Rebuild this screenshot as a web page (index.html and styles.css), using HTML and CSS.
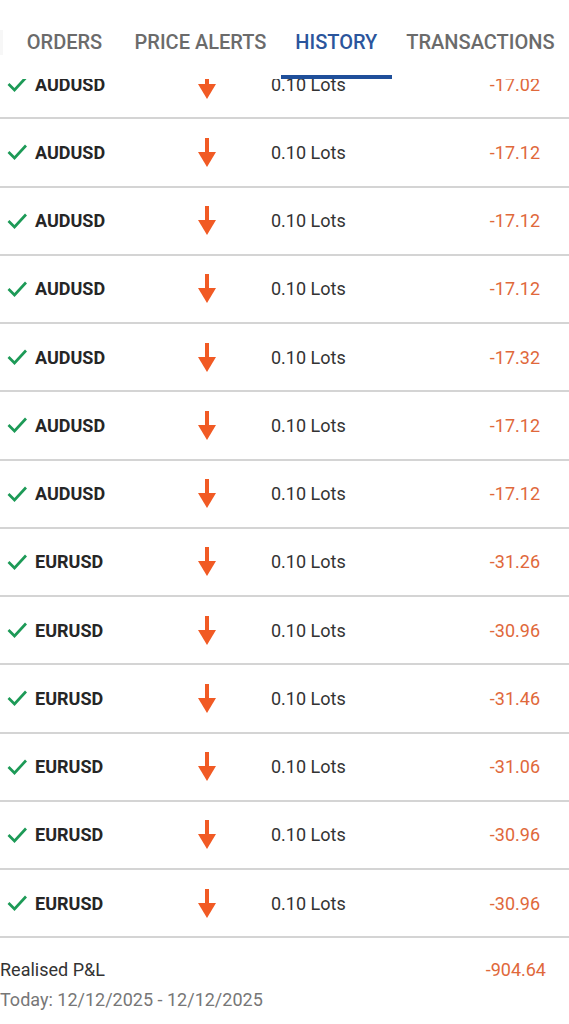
FILE: index.html
```html
<!DOCTYPE html>
<html>
  <head>
    <meta charset="utf-8">
    <meta name="viewport" content="width=device-width, initial-scale=1.0">
    <title>History</title>
    <link rel="stylesheet" href="styles.css">
  </head>
  <body>
  <header class="tabs">
    <div class="tabs__edge"></div>
    <div class="tab tab--first">ORDERS</div>
    <div class="tab">PRICE ALERTS</div>
    <div class="tab tab--active">HISTORY</div>
    <div class="tab">TRANSACTIONS</div>
  </header>
  <main class="history">
    <ul class="trades" id="trades"></ul>
    <footer class="summary">
      <div class="summary__line">
        <span>Realised P&amp;L</span>
        <span class="loss">-904.64</span>
      </div>
      <div class="summary__range">Today: 12/12/2025 - 12/12/2025</div>
    </footer>
  </main>
  <script type="text/javascript">
    var trades = [
      ['AUDUSD', '-17.02'], ['AUDUSD', '-17.12'], ['AUDUSD', '-17.12'],
      ['AUDUSD', '-17.12'], ['AUDUSD', '-17.32'], ['AUDUSD', '-17.12'],
      ['AUDUSD', '-17.12'], ['EURUSD', '-31.26'], ['EURUSD', '-30.96'],
      ['EURUSD', '-31.46'], ['EURUSD', '-31.06'], ['EURUSD', '-30.96'],
      ['EURUSD', '-30.96']
    ];
    var check = '<svg class="trade__check" width="20" height="18" viewBox="0 0 20 18"><polyline points="1.5,9 7.5,15 19,2.5" fill="none" stroke="#1d9a57" stroke-width="2.7"/></svg>';
    var arrow = '<svg class="trade__arrow" width="20" height="29" viewBox="0 0 20 29"><rect x="8" y="0" width="4" height="16" fill="#f15a24"/><polygon points="1,14 19,14 10,29" fill="#f15a24"/></svg>';
    var list = document.getElementById('trades');
    trades.forEach(function(t){
      var li = document.createElement('li');
      li.className = 'trade';
      li.innerHTML = check +
        '<span class="trade__symbol">' + t[0] + '</span>' +
        arrow +
        '<span class="trade__lots">0.10 Lots</span>' +
        '<span class="trade__pl loss">' + t[1] + '</span>';
      list.appendChild(li);
    })
  </script>
  </body>
</html>
```

FILE: styles.css
```css
* {
  box-sizing: border-box;
  font-family: Roboto, "Liberation Sans", Arial, sans-serif;
  margin: 0;
  padding: 0;
}

body, html {
  width: 100%;
  height: 100%;
  background: #fff;
  overflow: hidden;
}

.tabs {
  position: relative;
  z-index: 2;
  height: 79px;
  background: #fff;
  display: flex;
  align-items: stretch;
}

.tabs__edge {
  width: 3px;
  margin: 30px 6px 24px 0;
  background: #f7f7f7;
}

.tab {
  padding: 9px 14.5px 0;
  border-bottom: 4px solid transparent;
  display: flex;
  align-items: center;
  justify-content: center;
  font-size: 20px;
  font-weight: 500;
  color: #6b6b6b;
  white-space: nowrap;
}

.tab--first {
  width: 113px;
}

.tab--active {
  color: #2b559c;
  border-bottom-color: #1f4f9a;
}

.history {
  margin-top: -28px;
}

.trades {
  list-style: none;
}

.trade {
  height: 68.25px;
  border-bottom: 2px solid #d4d4d4;
  display: grid;
  grid-template-columns: 35px 162px 74px 1fr auto;
  align-items: center;
  padding-right: 29px;
  font-size: 18px;
}

.trade__check {
  margin-left: 7px;
}

.trade__symbol {
  font-weight: 700;
  color: #262626;
}

.trade__lots {
  color: #333;
}

.loss {
  color: #e0683b;
}

.summary {
  padding: 17px 23px 0 0;
  font-size: 18px;
  line-height: 30px;
}

.summary__line {
  display: flex;
  justify-content: space-between;
  color: #333;
}

.summary__range {
  color: #777;
}
```
